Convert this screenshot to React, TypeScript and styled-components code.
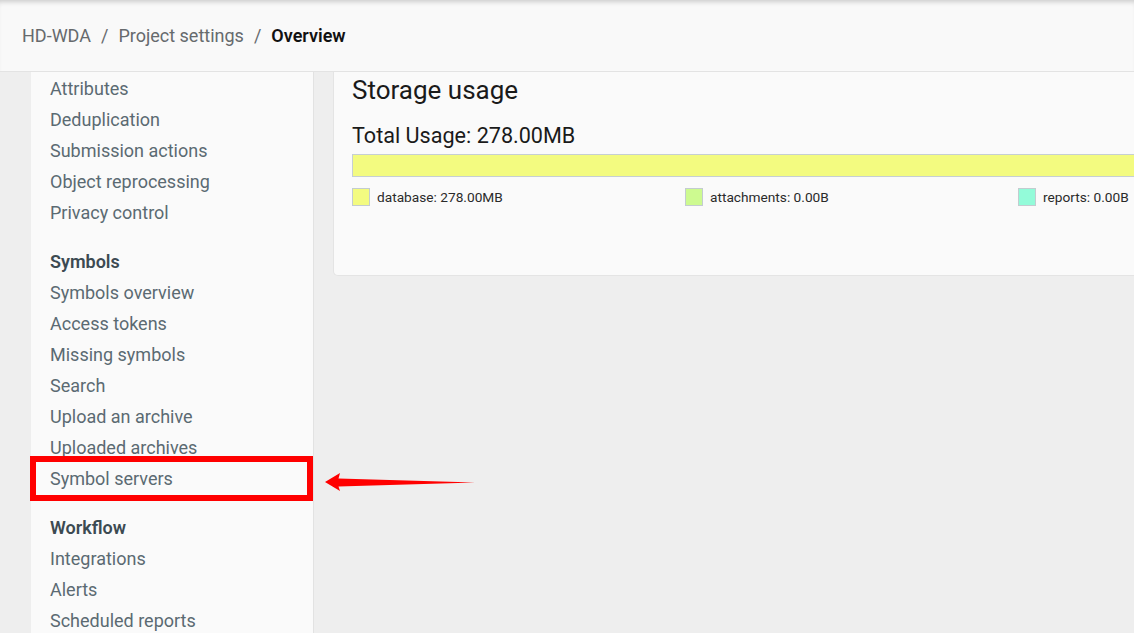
import React from "react";
import styled, { createGlobalStyle } from "styled-components";

const Global = createGlobalStyle`
  html, body { margin: 0; padding: 0; }
  body {
    background: #eeeeee;
    font-family: Roboto, "Noto Sans", Arial, sans-serif;
    overflow: hidden;
  }
`;

const Page = styled.div`
  width: 1134px;
  height: 633px;
  overflow: hidden;
  display: flex;
  flex-direction: column;
  background: #eeeeee;
  position: relative;
`;

const Header = styled.header`
  height: 71px;
  flex: none;
  display: flex;
  align-items: center;
  padding-left: 22px;
  background: #f9f9f9;
  border-bottom: 1px solid #e3e3e3;
  box-shadow: inset 0 5px 5px -3px rgba(0, 0, 0, 0.18);
  font-size: 18px;
  color: #666a6d;
`;

const Crumb = styled.span<{ $current?: boolean }>`
  color: ${(p) => (p.$current ? "#111111" : "#666a6d")};
  font-weight: ${(p) => (p.$current ? 600 : 400)};
`;

const Sep = styled.span`
  margin: 0 10px;
  color: #666a6d;
`;

const Body = styled.div`
  flex: 1;
  display: flex;
  align-items: flex-start;
  padding-left: 31px;
  gap: 19px;
  min-height: 0;
`;

const Sidebar = styled.nav`
  width: 263px;
  flex: none;
  align-self: stretch;
  background: #fafafa;
  border-right: 1px solid #e2e2e2;
  padding-left: 19px;
`;

const Group = styled.div<{ $first?: boolean }>`
  display: flex;
  flex-direction: column;
  margin-top: ${(p) => (p.$first ? 1 : 18)}px;
`;

const GroupTitle = styled.div`
  height: 31px;
  line-height: 31px;
  font-size: 18px;
  font-weight: 600;
  color: #3c4a52;
`;

const NavItem = styled.div<{ $marked?: boolean }>`
  position: relative;
  height: 31px;
  line-height: 31px;
  font-size: 18px;
  color: #5b6a72;
  white-space: nowrap;

  ${(p) =>
    p.$marked &&
    `
    &::after {
      content: "";
      position: absolute;
      left: -20px;
      top: -7px;
      width: 283px;
      height: 45px;
      box-sizing: border-box;
      border: 6px solid #ff0000;
      pointer-events: none;
    }
  `}
`;

const Card = styled.section`
  width: 1000px;
  flex: none;
  height: 204px;
  box-sizing: border-box;
  background: #fafafa;
  border-left: 1px solid #e4e4e4;
  border-bottom: 1px solid #e4e4e4;
  border-radius: 0 0 0 5px;
  padding: 3px 0 0 18px;
`;

const CardTitle = styled.h2`
  margin: 0;
  font-size: 26px;
  line-height: 30px;
  font-weight: 400;
  color: #1a1a1a;
`;

const Total = styled.div`
  margin-top: 19px;
  font-size: 21.6px;
  line-height: 24px;
  color: #1a1a1a;
`;

const Bar = styled.div`
  margin-top: 6px;
  height: 23px;
  box-sizing: border-box;
  border: 1px solid #c6cfd3;
  background: #f3fb80;
`;

const Legend = styled.div`
  display: flex;
  margin-top: 11px;
`;

const LegendItem = styled.div`
  width: 333px;
  flex: none;
  display: flex;
  align-items: center;
  gap: 7px;
  font-size: 13.7px;
  color: #2a2a2a;
`;

const Swatch = styled.span<{ $color: string }>`
  width: 18px;
  height: 18px;
  box-sizing: border-box;
  border: 1px solid #c3ccd0;
  background: ${(p) => p.$color};
`;

const Pointer = styled.svg`
  position: absolute;
  left: 320px;
  top: 468px;
  width: 160px;
  height: 28px;
  pointer-events: none;
`;

const groups: { title?: string; items: string[] }[] = [
  {
    items: [
      "Attributes",
      "Deduplication",
      "Submission actions",
      "Object reprocessing",
      "Privacy control",
    ],
  },
  {
    title: "Symbols",
    items: [
      "Symbols overview",
      "Access tokens",
      "Missing symbols",
      "Search",
      "Upload an archive",
      "Uploaded archives",
      "Symbol servers",
    ],
  },
  {
    title: "Workflow",
    items: ["Integrations", "Alerts", "Scheduled reports"],
  },
];

const legend = [
  { label: "database: 278.00MB", color: "#f3fb80" },
  { label: "attachments: 0.00B", color: "#cdfa90" },
  { label: "reports: 0.00B", color: "#93fbd9" },
];

export default function App() {
  return (
    <Page>
      <Global />
      <Header>
        <Crumb>HD-WDA</Crumb>
        <Sep>/</Sep>
        <Crumb>Project settings</Crumb>
        <Sep>/</Sep>
        <Crumb $current>Overview</Crumb>
      </Header>
      <Body>
        <Sidebar>
          {groups.map((g, gi) => (
            <Group key={gi} $first={gi === 0}>
              {g.title && <GroupTitle>{g.title}</GroupTitle>}
              {g.items.map((it) => (
                <NavItem key={it} $marked={it === "Symbol servers"}>
                  {it}
                </NavItem>
              ))}
            </Group>
          ))}
        </Sidebar>
        <Card>
          <CardTitle>Storage usage</CardTitle>
          <Total>Total Usage: 278.00MB</Total>
          <Bar />
          <Legend>
            {legend.map((l) => (
              <LegendItem key={l.label}>
                <Swatch $color={l.color} />
                {l.label}
              </LegendItem>
            ))}
          </Legend>
        </Card>
      </Body>
      <Pointer viewBox="320 468 160 28">
        <path
          d="M325 482 L340 473 L338.5 478.5 L475 482.5 L338.5 486.5 L340 491 Z"
          fill="#ff0000"
        />
      </Pointer>
    </Page>
  );
}
